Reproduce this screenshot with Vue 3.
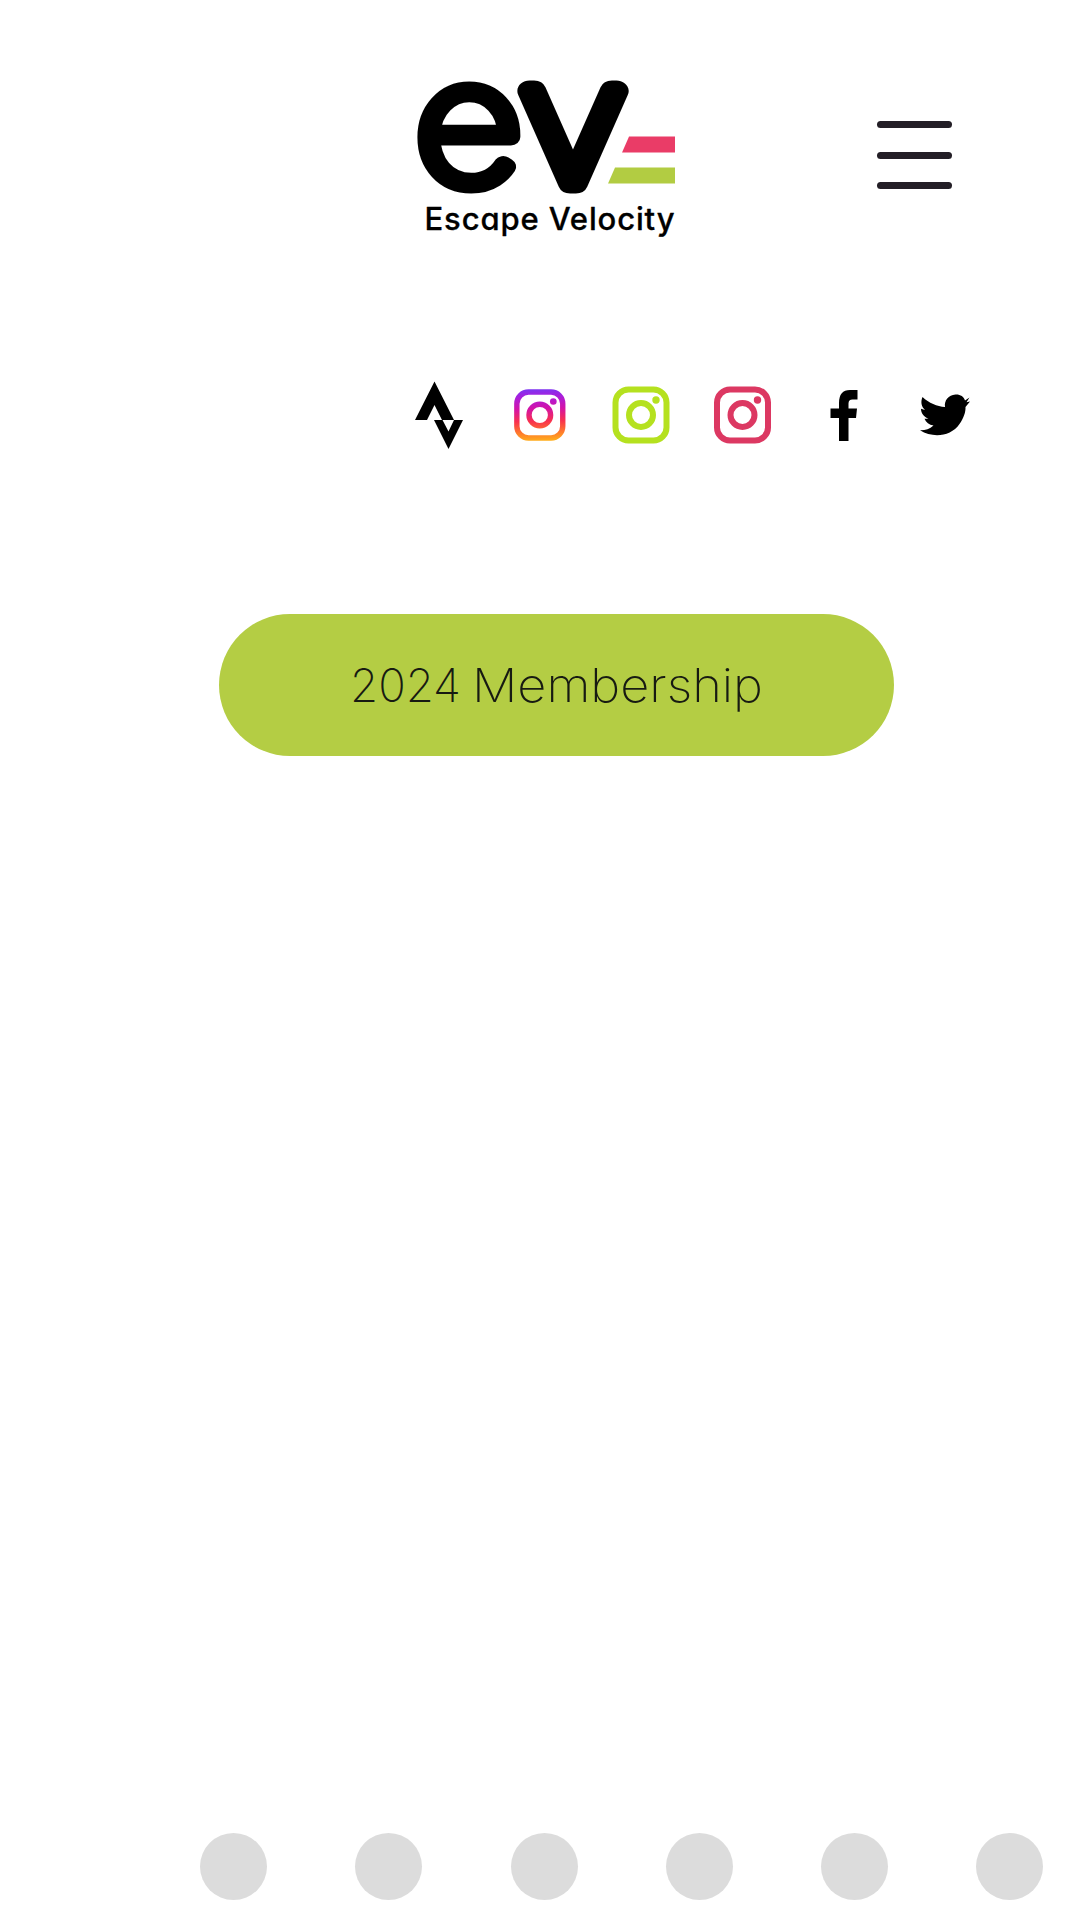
<template>
  <div class="page">

    <!-- ── Header ── -->
    <header class="header">
      <a class="logo" aria-label="Escape Velocity">
        <svg class="logo-svg" width="270" height="170" viewBox="410 70 270 170">
          <text class="mark mark-e" x="415" y="183" textLength="107" lengthAdjust="spacingAndGlyphs">e</text>
          <text class="mark mark-v" x="520" y="182.500" textLength="106" lengthAdjust="spacingAndGlyphs">v</text>
          <path d="M629 136.500H675V152.500H622Z" fill="#ea3c67" />
          <path d="M615 167.500H675V183.500H608Z" fill="#b2cc42" />
          <text class="name" x="424.500" y="230" textLength="250" lengthAdjust="spacing">Escape Velocity</text>
        </svg>
      </a>
      <button class="menu-btn" title="Menu">
        <span class="bar"></span>
        <span class="bar"></span>
        <span class="bar"></span>
      </button>
    </header>

    <!-- ── Social links ── -->
    <nav class="social">
      <a v-for="s in socials" :key="s.id" class="social-link" :aria-label="s.id">
        <svg width="70" height="70" viewBox="0 0 70 70">
          <defs v-if="s.gradient">
            <linearGradient id="insta" gradientUnits="userSpaceOnUse" x1="28" y1="64" x2="26" y2="6">
              <stop offset="0" stop-color="#ffae1c" />
              <stop offset="0.16" stop-color="#ff7a2c" />
              <stop offset="0.38" stop-color="#f8304f" />
              <stop offset="0.62" stop-color="#d313a8" />
              <stop offset="0.85" stop-color="#a81fdc" />
              <stop offset="1" stop-color="#7a35f2" />
            </linearGradient>
          </defs>
          <path v-if="s.path" :d="s.path" />
          <g v-else fill="none" :stroke="s.color" :transform="s.scale">
            <rect x="9.500" y="9.500" width="51" height="51" rx="13" stroke-width="6" />
            <circle cx="35" cy="35" r="12" stroke-width="6" />
            <circle cx="50" cy="20" r="3.700" :fill="s.color" stroke="none" />
          </g>
        </svg>
      </a>
    </nav>

    <!-- ── Membership ── -->
    <a class="membership">
      <svg width="430" height="80" viewBox="0 0 430 80">
        <text class="membership-text" y="57">
          <tspan x="8" textLength="111" lengthAdjust="spacingAndGlyphs">2024</tspan>
          <tspan x="130" textLength="291" lengthAdjust="spacingAndGlyphs">Membership</tspan>
        </text>
      </svg>
    </a>

    <footer class="dots">
      <span v-for="n in 6" :key="n" class="dot"></span>
    </footer>

  </div>
</template>

<script setup>
const socials = [
  { id: 'Strava', path: 'M31.500 1.500 51 40H39L31.500 25 24 40H12ZM31 40H39.500L45.500 51.500 51 40H60L45.500 69Z' },
  { id: 'Instagram', color: 'url(#insta)', gradient: true, scale: 'translate(4.3 3.5) scale(0.9)' },
  { id: 'Instagram green', color: '#b5e11f' },
  { id: 'Instagram red', color: '#dc3862', scale: 'translate(0.5 0)' },
  { id: 'Facebook', path: 'M30 61V38H21.500V28.500H30V23Q30 10 41 10H48.500V19.500H43.500Q39.500 19.500 39.500 23.500V28.500H48L47 38H39.500V61Z' },
  { id: 'Twitter', path: 'M55 20.500C54 16.500 50 14.200 45.500 14.500C38.500 15 34 20.500 35 27C27 26.500 19 23 12.500 17C10.500 21.500 11.200 26.500 15 30L11 28.800C11 33.500 14 37 18.500 38.800H14.500C16 42.500 19 45 23.500 45.500C19.500 49 15 50.500 10 50.300C23 58.500 41 56.500 49.500 44C53.500 38.500 55.800 32 55.500 27L60 21.500L56.500 22.300L59.500 17.500Z' }
]
</script>

<style>
body {
  background: #fff;
}
</style>

<style scoped>
.page {
  width: 1080px;
  height: 1920px;
  box-sizing: border-box;
  display: flex;
  flex-direction: column;
  overflow: hidden;
  background: #fff;
  font-family: Inter, "Open Sans", sans-serif;
}

/* ── Header ── */
.header {
  height: 240px;
  box-sizing: border-box;
  padding: 70px 128px 0 410px;
  display: flex;
  justify-content: space-between;
}
.logo {
  display: flex;
}
.logo-svg {
  overflow: visible;
}
.mark {
  font-family: Inter, sans-serif;
  font-weight: 100;
  stroke: #000;
  stroke-linejoin: round;
}
.mark-e {
  font-size: 168px;
  stroke-width: 17px;
}
.mark-v {
  font-size: 168px;
  stroke-width: 21px;
}
.name {
  font-family: Inter, sans-serif;
  font-size: 31px;
  font-weight: 500;
  font-feature-settings: "cv11";
  stroke: #000;
  stroke-width: 0.3px;
  stroke-linejoin: round;
}
.menu-btn {
  width: 75px;
  height: 68px;
  margin-top: 51px;
  padding: 0;
  border: none;
  background: none;
  display: flex;
  flex-direction: column;
  justify-content: space-between;
}
.bar {
  width: 75px;
  height: 7px;
  border-radius: 3.5px;
  background: #231e26;
}

/* ── Social links ── */
.social {
  margin: 140px 0 0 387px;
  display: flex;
}
.social-link {
  width: 101.5px;
  height: 70px;
  display: flex;
  justify-content: center;
}

/* ── Membership ── */
.membership {
  width: 675px;
  height: 142px;
  margin: 164px 0 0 219px;
  border-radius: 71px;
  background: #b4cd44;
  display: flex;
  align-items: center;
  justify-content: center;
}
.membership-text {
  font-size: 46.5px;
  font-weight: 200;
  fill: #171a12;
}

.dots {
  margin: auto 0 20px 200px;
  display: flex;
  gap: 88.3px;
}
.dot {
  width: 67px;
  height: 67px;
  flex-shrink: 0;
  border-radius: 50%;
  background: #dcdcdc;
}
</style>
